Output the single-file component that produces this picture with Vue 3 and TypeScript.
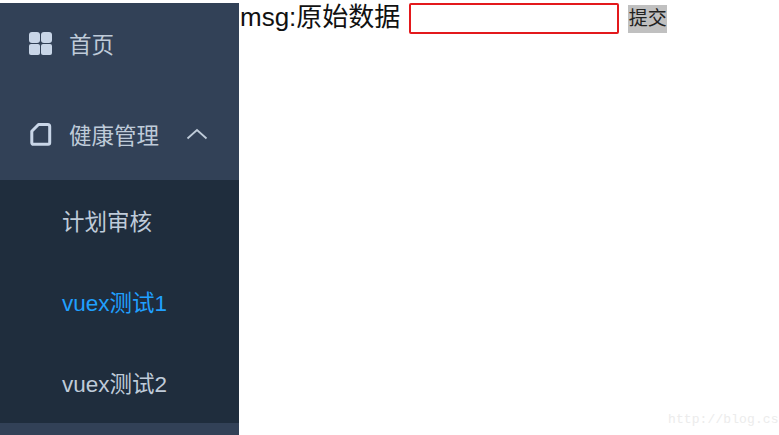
<script setup lang="ts">
const subItems = [
  { label: '计划审核', active: false },
  { label: 'vuex测试1', active: true },
  { label: 'vuex测试2', active: false },
]
</script>

<template>
  <div class="page">
    <aside class="sidebar">
      <div class="menu-item first">
        <svg class="icon" width="23" height="23" viewBox="0 0 23 23">
          <rect x="0" y="0" width="11" height="11" rx="3" fill="#c9d6e8" />
          <rect x="12" y="0" width="11" height="11" rx="3" fill="#c9d6e8" />
          <rect x="0" y="12" width="11" height="11" rx="2" fill="#c9d6e8" />
          <rect x="12" y="12" width="11" height="11" rx="2" fill="#c9d6e8" />
        </svg>
        <span>首页</span>
      </div>
      <div class="menu-item second">
        <svg class="icon" width="23" height="23" viewBox="0 0 23 23">
          <path d="M9.500 1.500h9.200a2 2 0 0 1 2 2v16.300a1.500 1.500 0 0 1-1.500 1.500H4.300a1.500 1.500 0 0 1-1.500-1.500V8.200z" fill="none" stroke="#c9d6e8" stroke-width="3" stroke-linejoin="round" />
        </svg>
        <span>健康管理</span>
        <svg class="chevron" width="22" height="12" viewBox="0 0 22 12">
          <path d="M1.500 10.500 11 2l9.500 8.500" fill="none" stroke="#bfcbd9" stroke-width="1.800" />
        </svg>
      </div>
      <ul class="submenu">
        <li v-for="item in subItems" :key="item.label" :class="{ active: item.active }">{{ item.label }}</li>
      </ul>
    </aside>
    <main class="content">
      <span class="msg">msg:原始数据</span>
      <input class="field" type="text" />
      <button class="submit" type="button">提交</button>
    </main>
    <div class="watermark">http://blog.cs</div>
  </div>
</template>

<style>
html, body { margin: 0; background: #fff; overflow: hidden; }
</style>

<style scoped>
.page {
  position: relative;
  width: 779px;
  height: 435px;
  display: flex;
  overflow: hidden;
  font-family: "Liberation Sans", "Noto Sans CJK SC", sans-serif;
}
.sidebar {
  width: 239px;
  height: 432px;
  margin-top: 3px;
  flex: none;
  background: #324157;
  color: #bfcbd9;
  font-size: 22.500px;
}
.menu-item {
  display: flex;
  align-items: center;
  padding-left: 29px;
  height: 88px;
  box-sizing: border-box;
}
.menu-item.first { padding-bottom: 8px; }
.menu-item.second { height: 89px; padding-bottom: 3px; }
.menu-item .icon { margin-right: 17px; flex: none; }
.chevron { margin-left: 27px; }
.submenu {
  margin: 0;
  padding: 0;
  list-style: none;
  background: #1f2d3d;
}
.submenu li {
  height: 81px;
  line-height: 86px;
  padding-left: 62px;
}
.submenu li.active { color: #20a0ff; }
.content {
  display: flex;
  align-items: flex-start;
  padding-left: 1px;
}
.msg {
  font-size: 26px;
  line-height: 34px;
  color: #111;
  margin-right: 9px;
  white-space: nowrap;
}
.field {
  width: 210px;
  height: 31px;
  margin: 3px 9px 0 0;
  box-sizing: border-box;
  border: 2px solid #e3191c;
  border-radius: 2px;
  background: #fff;
  padding: 0;
  outline: none;
}
.submit {
  width: 39px;
  height: 28px;
  margin-top: 5px;
  border: 0;
  padding: 0;
  background: #c0c0c0;
  color: #222;
  font-family: inherit;
  font-size: 19px;
  line-height: 28px;
}
.watermark {
  position: absolute;
  left: 668px;
  top: 412px;
  font-family: "Liberation Mono", monospace;
  font-size: 13px;
  letter-spacing: 0.100px;
  color: #ececec;
  white-space: nowrap;
}
</style>
